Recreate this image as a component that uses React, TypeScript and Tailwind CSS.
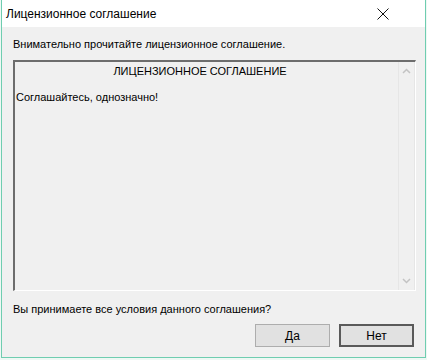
const font = { fontFamily: '"Liberation Sans", Arial, sans-serif' };

function Chevron({ up }: { up?: boolean }) {
  return (
    <svg width="9" height="6" viewBox="0 0 9 6" className="block">
      <path
        d={up ? "M1 5 L4.5 1.5 L8 5" : "M1 1 L4.5 4.5 L8 1"}
        fill="none"
        stroke="#c3c3c3"
        strokeWidth="1.5"
      />
    </svg>
  );
}

export default function App() {
  return (
    <div className="w-[427px] h-[360px] bg-[#eef8f4] pl-[1px] pr-[1px]" style={font}>
      <div className="flex h-[358px] flex-col border-x border-b border-[#6fcdb0] bg-[#f0f0f0]">
        {/* title bar */}
        <div className="flex h-[27px] items-center justify-between bg-white pl-[4px] pr-[36px]">
          <span className="text-[12px] text-black">Лицензионное соглашение</span>
          <svg width="12" height="12" viewBox="0 0 12 12">
            <path d="M0.5 0.5 L11.5 11.5 M11.5 0.5 L0.5 11.5" stroke="#111" strokeWidth="1" />
          </svg>
        </div>

        <div className="flex flex-1 flex-col px-[11px]">
          <p className="mt-[11px] text-[11px] leading-[13px] text-black">
            Внимательно прочитайте лицензионное соглашение.
          </p>

          {/* license box */}
          <div className="mt-[9px] flex h-[231px] w-[403px] border-l-2 border-t-2 border-r border-b border-l-[#6d6d6d] border-t-[#6d6d6d] border-r-white border-b-white bg-[#f0f0f0]">
            <div className="flex-1 pl-[1px] pt-[3px] text-[11px] leading-[13px] text-black">
              <div className="pr-[14px] text-center">ЛИЦЕНЗИОННОЕ СОГЛАШЕНИЕ</div>
              <div className="mt-[13px]">Соглашайтесь, однозначно!</div>
            </div>
            <div className="flex w-[17px] flex-col items-center justify-between border-l border-r border-[#e6e6e6] py-[6px]">
              <Chevron up />
              <Chevron />
            </div>
          </div>

          <p className="mt-[12px] text-[11px] leading-[13px] text-black">
            Вы принимаете все условия данного соглашения?
          </p>

          <div className="mt-[8px] flex justify-end gap-[9px]">
            <button className="h-[23px] w-[75px] border border-[#adadad] bg-[#e1e1e1] text-[12px] text-black">
              Да
            </button>
            <button className="h-[23px] w-[75px] border-2 border-[#5a5a5a] bg-[#e1e1e1] text-[12px] text-black">
              Нет
            </button>
          </div>
        </div>
      </div>
    </div>
  );
}
